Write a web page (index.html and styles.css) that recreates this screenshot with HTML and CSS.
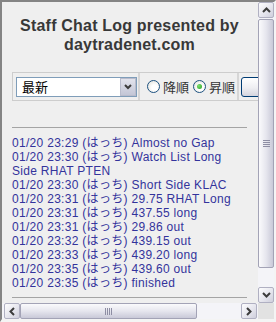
FILE: index.html
```html
<!DOCTYPE html>
<html lang="ja">

<head>
    <meta charset="UTF-8">
    <meta name="viewport" content="width=device-width, initial-scale=1.0">
    <title>Staff Chat Log</title>
    <link rel="stylesheet" href="styles.css">
</head>

<body>
    <div class="frame">
        <div class="view">
            <div class="page">
                <h1 class="title">Staff Chat Log presented by<br>daytradenet.com</h1>

                <div class="controls">
                    <div class="cell">
                        <div class="select">
                            <span class="select-text">最新</span>
                            <span class="select-btn">
                                <svg width="8" height="6" viewBox="0 0 8 6"><polyline points="1,1 4,4 7,1" fill="none" stroke="#3c3c3c" stroke-width="2"/></svg>
                            </span>
                        </div>
                    </div>
                    <div class="cell radios">
                        <span class="radio"></span><span class="radio-label">降順</span>
                        <span class="radio checked"></span><span class="radio-label">昇順</span>
                    </div>
                    <div class="cell">
                        <span class="button"></span>
                    </div>
                </div>

                <hr class="rule">

                <div class="log">
                    <div class="entry">01/20 23:29 (はっち) Almost no Gap</div>
                    <div class="entry">01/20 23:30 (はっち) Watch List Long Side RHAT PTEN</div>
                    <div class="entry">01/20 23:30 (はっち) Short Side KLAC</div>
                    <div class="entry">01/20 23:31 (はっち) 29.75 RHAT Long</div>
                    <div class="entry">01/20 23:31 (はっち) 437.55 long</div>
                    <div class="entry">01/20 23:31 (はっち) 29.86 out</div>
                    <div class="entry">01/20 23:32 (はっち) 439.15 out</div>
                    <div class="entry">01/20 23:33 (はっち) 439.20 long</div>
                    <div class="entry">01/20 23:35 (はっち) 439.60 out</div>
                    <div class="entry">01/20 23:35 (はっち) finished</div>
                </div>

                <hr class="rule bottom">
            </div>
        </div>

        <!-- scrollbars are drawn, the page itself does not scroll -->
        <div class="vscroll">
            <span class="sb-btn">
                <svg width="9" height="6" viewBox="0 0 9 6"><polyline points="1,5 4.5,1.5 8,5" fill="none" stroke="#3c3c3c" stroke-width="2"/></svg>
            </span>
            <span class="thumb v"><span class="grip"></span></span>
            <span class="track"></span>
            <span class="sb-btn">
                <svg width="9" height="6" viewBox="0 0 9 6"><polyline points="1,1 4.5,4.5 8,1" fill="none" stroke="#3c3c3c" stroke-width="2"/></svg>
            </span>
        </div>
        <div class="hscroll">
            <span class="sb-btn">
                <svg width="6" height="9" viewBox="0 0 6 9"><polyline points="5,1 1.5,4.5 5,8" fill="none" stroke="#3c3c3c" stroke-width="2"/></svg>
            </span>
            <span class="thumb h"><span class="grip"></span></span>
            <span class="track"></span>
            <span class="sb-btn">
                <svg width="6" height="9" viewBox="0 0 6 9"><polyline points="1,1 4.5,4.5 1,8" fill="none" stroke="#3c3c3c" stroke-width="2"/></svg>
            </span>
        </div>
        <div class="corner"></div>
    </div>
</body>

</html>
```

FILE: styles.css
```css
body {
    margin: 0;
    font-family: "Liberation Sans", "Noto Sans CJK JP", sans-serif;
}

.frame {
    width: 276px;
    height: 322px;
    box-sizing: border-box;
    border-style: solid;
    border-width: 2px 2px 3px 2px;
    border-color: #848484 #f4f4f4 #f4f4f4 #848484;
    background: #efefef;
    display: grid;
    grid-template-columns: 256px 16px;
    grid-template-rows: 301px 16px;
}

.view {
    overflow: hidden;
}

.page {
    width: 235px;
    padding: 14px 11px 0 10px;
}

.title {
    margin: 0;
    font-size: 16px;
    font-weight: bold;
    line-height: 19px;
    letter-spacing: 0.2px;
    text-align: center;
    color: #383838;
    white-space: nowrap;
}

/* control row */

.controls {
    display: flex;
    width: max-content;
    margin-top: 18px;
    border: 1px solid #cdcdcd;
}

.cell {
    display: flex;
    align-items: center;
    height: 27px;
    padding: 0 1px 0 3px;
}

.cell + .cell {
    border-left: 2px solid #d6d6d6;
}

.select {
    display: flex;
    justify-content: space-between;
    width: 121px;
    height: 20px;
    box-sizing: border-box;
    border: 1px solid #7f9db9;
    background: #fff;
}

.select-text {
    padding-left: 5px;
    font-family: "Noto Sans CJK JP", sans-serif;
    font-size: 13px;
    line-height: 18px;
    color: #000;
}

.select-btn {
    display: flex;
    align-items: center;
    justify-content: center;
    width: 16px;
    box-sizing: border-box;
    border: 1px solid #b9bccc;
    background: linear-gradient(#e2e3ec, #c3c6d6);
}

.radios {
    padding: 0 2px 0 7px;
}

.radio {
    width: 13px;
    height: 13px;
    box-sizing: border-box;
    border: 1px solid #1c5180;
    border-radius: 50%;
    background: radial-gradient(circle at 60% 60%, #fff 30%, #dcdcd4);
    display: flex;
    align-items: center;
    justify-content: center;
}

.radio.checked::after {
    content: "";
    width: 5px;
    height: 5px;
    border-radius: 50%;
    background: radial-gradient(circle at 35% 35%, #7ede6e, #21a121);
}

.radio-label {
    margin: 0 4px 0 3px;
    font-family: "Noto Sans CJK JP", sans-serif;
    font-size: 13px;
    line-height: 18px;
    color: #333;
}

.radio-label:last-child {
    margin-right: 0;
}

.cell:last-child {
    padding-left: 2px;
}

.button {
    width: 72px;
    height: 20px;
    box-sizing: border-box;
    border: 1px solid #003c74;
    border-radius: 3px;
    background: linear-gradient(#fff, #eeeef2 55%, #d4d4de);
}

.rule {
    height: 0;
    margin: 26px 0 0;
    border: 0;
    border-top: 1px solid #a4a4a4;
}

.rule.bottom {
    margin-top: 7px;
}

/* log */

.log {
    margin-top: 8px;
    font-size: 12px;
    line-height: 14px;
    letter-spacing: 0.3px;
    color: #33339c;
}

/* scrollbars */

.vscroll,
.hscroll {
    display: flex;
    background: #f4f4f8;
}

.vscroll {
    flex-direction: column;
}

.hscroll {
    padding: 0 1px 0 2px;
}

.sb-btn {
    display: flex;
    align-items: center;
    justify-content: center;
    width: 16px;
    height: 16px;
    flex: none;
    box-sizing: border-box;
    border: 1px solid #b0b0c2;
    border-radius: 2px;
    background: linear-gradient(135deg, #fdfdfe, #e6e6ee 55%, #cfcfdc);
}

.thumb {
    display: flex;
    align-items: center;
    justify-content: center;
    flex: none;
    box-sizing: border-box;
    border: 1px solid #a3a3b6;
    border-radius: 2px;
}

.thumb.v {
    height: 249px;
    margin-top: 1px;
    background: linear-gradient(to right, #fafafc, #e6e6ee 50%, #c9c9d8);
}

.thumb.h {
    width: 177px;
    background: linear-gradient(#fafafc, #e6e6ee 50%, #c9c9d8);
}

.grip {
    width: 7px;
    height: 7px;
}

.thumb.v .grip {
    background: repeating-linear-gradient(#8e8ea4 0 1px, transparent 1px 2px);
}

.thumb.h .grip {
    background: repeating-linear-gradient(to right, #8e8ea4 0 1px, transparent 1px 2px);
}

.track {
    flex: 1;
}

.corner {
    background: #e2e2e2;
}
```
